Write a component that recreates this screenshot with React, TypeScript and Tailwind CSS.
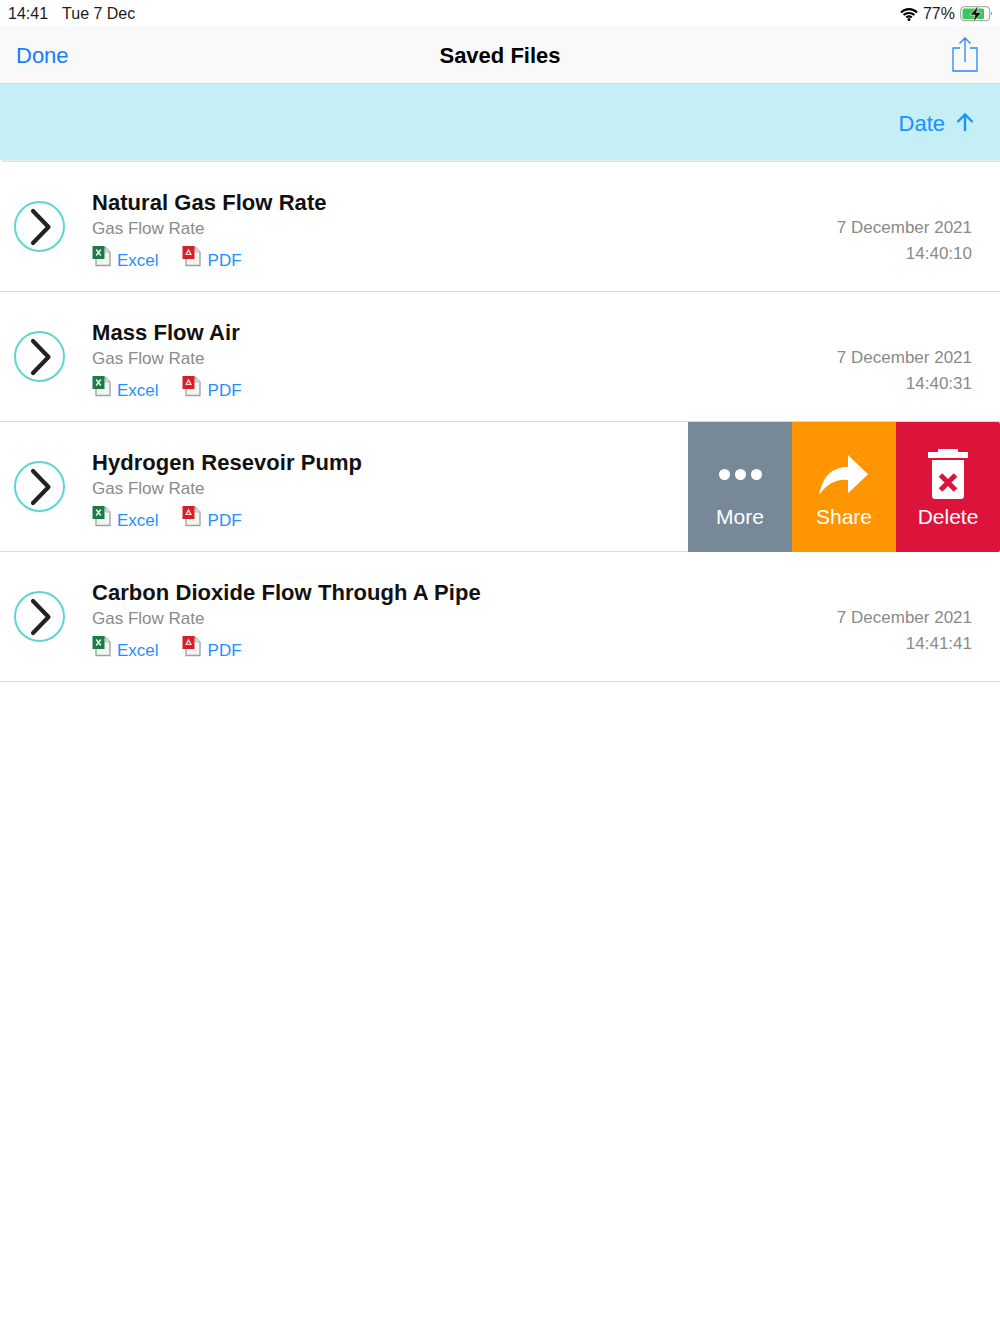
type Row = { title: string; date?: string; time?: string; swiped?: boolean };

const ROWS: Row[] = [
  { title: "Natural Gas Flow Rate", date: "7 December 2021", time: "14:40:10" },
  { title: "Mass Flow Air", date: "7 December 2021", time: "14:40:31" },
  { title: "Hydrogen Resevoir Pump", swiped: true },
  { title: "Carbon Dioxide Flow Through A Pipe", date: "7 December 2021", time: "14:41:41" },
];

function FileIcon({ kind }: { kind: "x" | "pdf" }) {
  const color = kind === "x" ? "#1f7a45" : "#d5202a";
  return (
    <svg width="20" height="22" viewBox="0 0 20 22" className="shrink-0 mt-[1px]">
      <path d="M4 2.500h9.500l4.500 4.500v13.500h-14z" fill="#f2f5f3" stroke="#97a39d" strokeWidth="1.300" />
      <path d="M13.500 2.500v4.500h4.500" fill="#dfe4e0" stroke="#b5bdb8" strokeWidth="1" />
      <rect x="0.500" y="1" width="12" height="13" fill={color} />
      {kind === "x" ? (
        <path d="M4.200 4.500l4.600 6M8.800 4.500l-4.600 6" stroke="#e8f3ec" strokeWidth="1.500" />
      ) : (
        <path d="M6.500 3.500l3.500 6.500h-7zM6.500 6.500l-1.300 2.500h2.600z" fill="#ffd9d9" fillRule="evenodd" />
      )}
    </svg>
  );
}

function SwipeActions() {
  return (
    <div className="absolute right-0 top-0 -bottom-px flex text-white text-[21px] leading-none">
      <div className="w-[104px] bg-[#778899] flex flex-col items-center pt-[47px]">
        <div className="flex gap-[5px] h-[32px]">
          <div className="w-[11px] h-[11px] rounded-full bg-white" />
          <div className="w-[11px] h-[11px] rounded-full bg-white" />
          <div className="w-[11px] h-[11px] rounded-full bg-white" />
        </div>
        <span className="mt-[5px]">More</span>
      </div>
      <div className="w-[104px] bg-[#ff9500] flex flex-col items-center pt-[33px]">
        <svg width="50" height="42" viewBox="0 0 50 42" className="mb-[9px]">
          <path d="M0 40Q5 12 29 11.700V0L49 19.300 29 38.300V25Q12 23 0 40z" fill="#fff" />
        </svg>
        <span>Share</span>
      </div>
      <div className="w-[104px] bg-[#dc143c] rounded-r-[2px] flex flex-col items-center pt-[27px]">
        <svg width="40" height="50" viewBox="0 0 40 50" className="mb-[7px]">
          <path d="M10 0h20v3h10v6H0V3h10z" fill="#fff" />
          <path d="M4 11h32v36q0 3-3 3H7q-3 0-3-3z" fill="#fff" />
          <path d="M12.500 26l15 15M27.500 26l-15 15" stroke="#dc143c" strokeWidth="5" />
        </svg>
        <span>Delete</span>
      </div>
    </div>
  );
}

export default function App() {
  return (
    <div className="w-[1000px] h-[1334px] bg-white font-['Liberation_Sans',sans-serif] overflow-hidden">
      {/* status bar */}
      <div className="h-[26px] flex items-center justify-between pl-[8px] pr-[6px] pt-[1px] text-[16px] text-[#1c1c1c]">
        <div className="flex gap-[14px]">
          <span>14:41</span>
          <span>Tue 7 Dec</span>
        </div>
        <div className="flex items-center gap-[5px]">
          <svg width="18" height="14" viewBox="0 0 18 14">
            <path d="M1 5.500C5.500 1 12.500 1 17 5.500M3.600 8C6.500 5.300 11.500 5.300 14.400 8M6.200 10.400C7.800 9.200 10.200 9.200 11.800 10.400" fill="none" stroke="#000" strokeWidth="2.200" />
            <circle cx="9" cy="12.500" r="1.500" />
          </svg>
          <span>77%</span>
          <svg width="34" height="18" viewBox="0 0 34 18">
            <rect x="0.700" y="1.700" width="29" height="14" rx="3.500" fill="none" stroke="#999" />
            <rect x="2.500" y="3.500" width="21.500" height="10.500" rx="1.500" fill="#3dc95a" />
            <path d="M31 6.500q2 2 0 4z" fill="#888" />
            <path d="M18.500 0.500L10 10h5l-2 7.500L21.500 7.500h-5z" fill="#111" stroke="#fff" strokeWidth="0.600" />
          </svg>
        </div>
      </div>

      {/* nav bar */}
      <div className="h-[58px] bg-[#f9f9f9] border-b border-[#d4d4d4] grid grid-cols-[1fr_auto_1fr] items-center px-[16px] pt-[2px]">
        <span className="text-[22px] text-[#147efb]">Done</span>
        <span className="text-[22px] font-bold text-black">Saved Files</span>
        <svg width="26" height="36" viewBox="0 0 26 36" fill="none" stroke="#2a86f5" strokeWidth="1.300" className="justify-self-end -mt-[4px] mr-[6px]">
          <path d="M8 12H1v23h24V12h-7M13 26V2M7.500 7.500L13 2l5.500 5.500" />
        </svg>
      </div>

      {/* sort bar */}
      <div className="h-[76px] bg-[#c3eff5] flex items-center justify-end gap-[11px] pr-[26px] pt-[2px]">
        <span className="text-[22px] text-[#1e90ff]">Date</span>
        <svg width="18" height="18" viewBox="0 0 18 18" fill="none" stroke="#1e90ff" strokeWidth="2.400" className="-mt-[3px]">
          <path d="M9 18V1.500M1.500 9L9 1.500 16.500 9" />
        </svg>
      </div>
      <div className="h-[2px] bg-[#e9eeee] ml-[2px] border-b border-[#e5dfdf]" />

      {/* rows */}
      {ROWS.map((row) => (
        <div key={row.title} className="relative h-[130px] border-b border-[#d9d9d9] flex items-center pl-[14px] pr-[28px]">
          <div className="w-[51px] h-[51px] rounded-full border-2 border-[#62d3d3] flex items-center justify-center shrink-0">
            <svg width="22" height="38" viewBox="0 0 22 38" fill="none" stroke="#222" strokeWidth="4.200" strokeLinecap="round" strokeLinejoin="round" className="ml-[3px]">
              <path d="M3 3L18.500 19 3 35" />
            </svg>
          </div>
          <div className="ml-[27px] flex-1 pt-[10px]">
            <div className="text-[22px] font-bold text-[#111] leading-[27px] tracking-[0.05px]">{row.title}</div>
            <div className="text-[17px] text-[#8a8a8a] leading-[26px]">Gas Flow Rate</div>
            <div className="flex items-start text-[17px] text-[#1e90ff] leading-[26px] mt-[2px]">
              <FileIcon kind="x" />
              <span className="ml-[5px] mt-[4px]">Excel</span>
              <span className="ml-[23px]"><FileIcon kind="pdf" /></span>
              <span className="ml-[6px] mt-[4px]">PDF</span>
            </div>
          </div>
          {row.date && (
            <div className="text-right text-[17px] text-[#8a8a8a] leading-[26px] pt-[29px]">
              <div>{row.date}</div>
              <div>{row.time}</div>
            </div>
          )}
          {row.swiped && <SwipeActions />}
        </div>
      ))}
    </div>
  );
}
